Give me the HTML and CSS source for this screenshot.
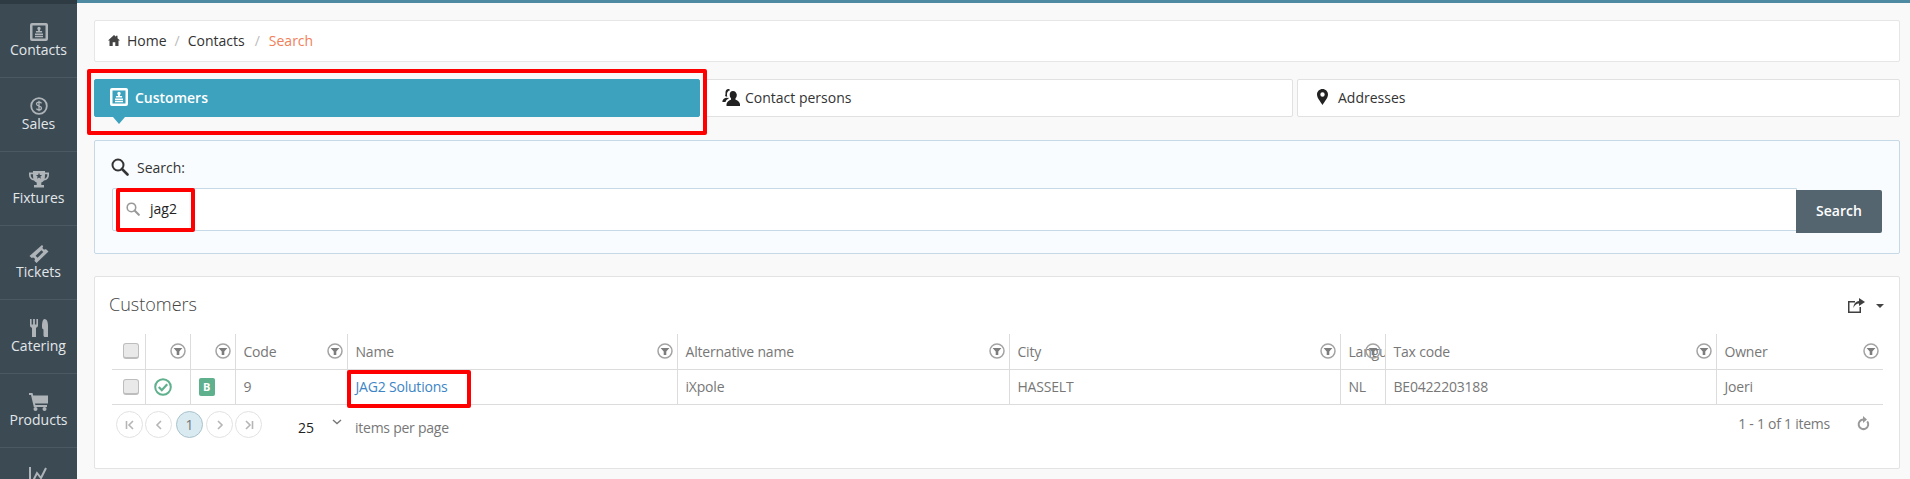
FILE: index.html
```html
<!DOCTYPE html>
<html lang="en">
<head>
<meta charset="utf-8">
<title>Contacts search</title>
<link rel="stylesheet" href="styles.css">
</head>
<body>
<svg class="sprite" width="0" height="0">
  <symbol id="i-contact" viewBox="0 0 18 18"><path fill-rule="evenodd" d="M2 0h14a2 2 0 0 1 2 2v14a2 2 0 0 1-2 2H2a2 2 0 0 1-2-2V2a2 2 0 0 1 2-2zm.5 2.500v13h13v-13z"/><path d="M9 3.800a1.700 1.700 0 0 1 1.700 1.700c0 .8-.4 1.300-.8 1.600v.9h2.200v1.500H5.900V8h2.200v-.9c-.4-.3-.8-.8-.8-1.600A1.700 1.700 0 0 1 9 3.800zM5 10.500h8V12H5zM5 12.800h8v1.500H5z"/></symbol>
  <symbol id="i-filter" viewBox="0 0 16 16"><circle cx="8" cy="8" r="7" fill="none" stroke="#a3a3a3" stroke-width="1.500"/><path fill="#7d7d7d" d="M3.600 5h8.800L9.300 8.500V12H6.700V8.500z"/></symbol>
  <symbol id="i-search" viewBox="0 0 18 18"><circle cx="7" cy="7" r="5.500" fill="none" stroke="currentColor" stroke-width="2"/><path d="M11 11l5.500 5.500" stroke="currentColor" stroke-width="2.600" stroke-linecap="round"/></symbol>
</svg>

<div class="app">
  <nav class="sidebar">
    <a class="nav-item">
      <svg class="nav-icon" width="18" height="18"><use href="#i-contact"/></svg>
      <span>Contacts</span>
    </a>
    <a class="nav-item">
      <svg class="nav-icon" width="18" height="18" viewBox="0 0 18 18"><circle cx="9" cy="9" r="7.800" fill="none" stroke="currentColor" stroke-width="1.800"/><path d="M11.500 6.300C11 5.500 10 5.200 9 5.200c-1.400 0-2.500.7-2.500 1.900 0 2.500 5 1.400 5 3.800 0 1.200-1.100 1.900-2.500 1.900-1.100 0-2.100-.4-2.600-1.200M9 3.800v10.400" fill="none" stroke="currentColor" stroke-width="1.300"/></svg>
      <span>Sales</span>
    </a>
    <a class="nav-item">
      <svg class="nav-icon" width="20" height="18" viewBox="0 0 20 18"><path fill-rule="evenodd" d="M4 0h12v1.500h4V4c0 3-2 5-5 5.600-.7 1-1.600 1.700-2.700 2V14H15v2.500H5V14h2.700v-2.400c-1.100-.3-2-1-2.700-2C2 9 0 7 0 4V1.500h4zM1.700 3.200V4c0 1.800 1 3.200 2.600 3.800-.2-1.400-.3-3-.3-4.600zm16.600 0H16c0 1.600-.1 3.200-.3 4.600 1.600-.6 2.600-2 2.600-3.800zM10 1.800l-.9 2.100-2.200.2 1.700 1.500-.5 2.200L10 6.600l1.900 1.200-.5-2.200 1.700-1.500-2.200-.2z"/></svg>
      <span>Fixtures</span>
    </a>
    <a class="nav-item">
      <svg class="nav-icon" width="20" height="18" viewBox="0 0 20 18"><path fill-rule="evenodd" d="M13 0l1.200 1.300a1.800 1.800 0 0 0 2.600 2.600L19.500 6.500 7.500 18l-2.200-2.300a1.800 1.800 0 0 0-2.600-2.600L.5 11zm-.6 5.200L6.600 10.800l1.900 1.900 5.800-5.600z"/></svg>
      <span>Tickets</span>
    </a>
    <a class="nav-item">
      <svg class="nav-icon" width="20" height="18" viewBox="0 0 20 18"><path d="M1 0h1.600v5.500h1.500V0h1.800v5.500h1.500V0H9v6.500c0 1.200-.9 2-2 2.300V18H3V8.800C1.900 8.500 1 7.700 1 6.500zM15.500 0c2.200 0 3.500 2.800 3.500 6.500V18h-3c-.8 0-1.500-.7-1.500-1.500V10.500C13.300 10 13 9 13 7.500 13 3 14 0 15.500 0z"/></svg>
      <span>Catering</span>
    </a>
    <a class="nav-item">
      <svg class="nav-icon" width="19" height="18" viewBox="0 0 19 18"><path d="M0 0h3.500l.7 2.500H19v8H6l.4 1.500H18v2H4.800L2 2H0z"/><circle cx="6.500" cy="16" r="2"/><circle cx="15.500" cy="16" r="2"/></svg>
      <span>Products</span>
    </a>
    <a class="nav-item">
      <svg class="nav-icon" width="20" height="18" viewBox="0 0 20 18"><path d="M0 0h2v16h18v2H0z"/><path d="M4 14l4-8 4 5 5-10" fill="none" stroke="currentColor" stroke-width="2"/></svg>
      <span>Reports</span>
    </a>
  </nav>

  <main class="content">
    <div class="breadcrumb">
      <svg class="home-icon" width="12" height="11" viewBox="0 0 12 11"><path d="M6 0l2 1.800V.8h1.500v2.400L12 5.500h-1.500V11H7.300V7.300H4.700V11H1.500V5.500H0z"/></svg>
      <span class="crumb">Home</span>
      <span class="crumb-sep">/</span>
      <span class="crumb">Contacts</span>
      <span class="crumb-sep crumb-sep-last">/</span>
      <span class="crumb-current">Search</span>
    </div>

    <div class="tabs">
      <div class="tab tab-customers tab-active">
        <svg class="tab-icon-active" width="18" height="18"><use href="#i-contact"/></svg>
        <span>Customers</span>
      </div>
      <div class="tab tab-persons">
        <svg class="tab-icon" width="18" height="17" viewBox="0 0 18 17"><path d="M6.500 0C4.500 0 3.500 1.500 3.500 3.300c0 1.700.1 2.700-.5 3.700.6.500 1.400.7 2.300.8C5 7 5 6 5 5c0-1.700 1-3.200 3-3.800C7.700.5 7.200 0 6.500 0zM4 8.800C2.300 9.300.5 10.500.3 13h3.200c.4-1.600 1.500-2.600 3-3.300V8.800C5.700 9 4.800 9 4 8.800zM11 2c-2.200 0-3.300 1.700-3.300 3.500 0 1.700.3 3 1.300 3.800v1.400c-2 .7-4 1.800-4.500 4.300v2h13.500v-2c-.5-2.500-2.500-3.600-4.500-4.300V9.300c1-.8 1.300-2.100 1.300-3.800C14.300 3.700 13.200 2 11 2z"/></svg>
        <span>Contact persons</span>
      </div>
      <div class="tab tab-addresses">
        <svg class="tab-icon" width="11" height="16" viewBox="0 0 11 16"><path fill-rule="evenodd" d="M5.500 0C8.500 0 11 2.400 11 5.500 11 9 7.500 12.500 5.500 16 3.500 12.500 0 9 0 5.500 0 2.400 2.500 0 5.500 0zm0 3.300a2.200 2.200 0 1 0 0 4.400 2.200 2.200 0 0 0 0-4.400z"/></svg>
        <span>Addresses</span>
      </div>
    </div>
    <div class="tab-arrow"></div>

    <section class="search-panel">
      <label class="search-label">
        <svg class="search-label-icon" width="18" height="18"><use href="#i-search"/></svg>
        <span>Search:</span>
      </label>
      <div class="search-row">
        <div class="search-input">
          <svg class="search-input-icon" width="14" height="14"><use href="#i-search"/></svg>
          <span>jag2</span>
        </div>
        <button class="search-btn">Search</button>
      </div>
    </section>

    <section class="grid-panel">
      <header class="grid-header">
        <h2>Customers</h2>
        <div class="grid-tools">
          <svg class="export-icon" width="17" height="15" viewBox="0 0 17 15"><path d="M0 3h7v1.500H1.500v9h10V9H13v6H0z"/><path d="M11 0l6 4-6 4V5.500C8.500 5.500 6.500 7 5.500 10c0-4 2-6.500 5.500-7z"/></svg>
          <span class="caret"></span>
        </div>
      </header>

      <table class="grid">
        <thead>
          <tr>
            <th class="c-check"><span class="checkbox"></span></th>
            <th class="c-status"><svg class="filter" width="16" height="16"><use href="#i-filter"/></svg></th>
            <th class="c-type"><svg class="filter" width="16" height="16"><use href="#i-filter"/></svg></th>
            <th class="c-code">Code<svg class="filter" width="16" height="16"><use href="#i-filter"/></svg></th>
            <th class="c-name">Name<svg class="filter" width="16" height="16"><use href="#i-filter"/></svg></th>
            <th class="c-alt">Alternative name<svg class="filter" width="16" height="16"><use href="#i-filter"/></svg></th>
            <th class="c-city">City<svg class="filter" width="16" height="16"><use href="#i-filter"/></svg></th>
            <th class="c-lang">Language<svg class="filter" width="16" height="16"><use href="#i-filter"/></svg></th>
            <th class="c-tax">Tax code<svg class="filter" width="16" height="16"><use href="#i-filter"/></svg></th>
            <th class="c-owner">Owner<svg class="filter" width="16" height="16"><use href="#i-filter"/></svg></th>
          </tr>
        </thead>
        <tbody>
          <tr>
            <td><span class="checkbox"></span></td>
            <td class="cell-icon"><svg width="18" height="18" viewBox="0 0 18 18"><circle cx="9" cy="9" r="7.800" fill="none" stroke="#5fb08c" stroke-width="2"/><path d="M4.800 9l3 3.200 5.400-6" fill="none" stroke="#5fb08c" stroke-width="2.200"/></svg></td>
            <td class="cell-icon"><span class="badge">B</span></td>
            <td>9</td>
            <td><a class="link">JAG2 Solutions</a></td>
            <td>iXpole</td>
            <td>HASSELT</td>
            <td>NL</td>
            <td>BE0422203188</td>
            <td>Joeri</td>
          </tr>
        </tbody>
      </table>

      <footer class="pager">
        <div class="pager-left">
          <span class="page-btn"><svg width="10" height="10" viewBox="0 0 10 10"><path d="M1.500 1v8M8 1L4 5l4 4" fill="none" stroke="#b5b5b5" stroke-width="1.600"/></svg></span>
          <span class="page-btn"><svg width="10" height="10" viewBox="0 0 10 10"><path d="M7 1L3 5l4 4" fill="none" stroke="#b5b5b5" stroke-width="1.600"/></svg></span>
          <span class="page-btn page-current">1</span>
          <span class="page-btn"><svg width="10" height="10" viewBox="0 0 10 10"><path d="M3 1l4 4-4 4" fill="none" stroke="#b5b5b5" stroke-width="1.600"/></svg></span>
          <span class="page-btn"><svg width="10" height="10" viewBox="0 0 10 10"><path d="M8.500 1v8M2 1l4 4-4 4" fill="none" stroke="#b5b5b5" stroke-width="1.600"/></svg></span>
          <span class="page-size">25</span>
          <svg class="page-chevron" width="10" height="6" viewBox="0 0 10 6"><path d="M1 1l4 3.500L9 1" fill="none" stroke="#777" stroke-width="1.400"/></svg>
          <span class="page-label">items per page</span>
        </div>
        <div class="pager-right">
          <span>1 - 1 of 1 items</span>
          <svg class="refresh" width="13" height="15" viewBox="0 0 13 15"><path d="M10.200 5.300a4.800 4.800 0 1 1-3.800-1.800" fill="none" stroke="#999" stroke-width="2"/><path fill="#999" d="M6 0v7l4-3.500z"/></svg>
        </div>
      </footer>
    </section>
  </main>
</div>

<div class="mark mark-tab"></div>
<div class="mark mark-search"></div>
<div class="mark mark-name"></div>
</body>
</html>
```
FILE: styles.css
```css
* { box-sizing: border-box; }
html, body { margin: 0; padding: 0; height: 100%; overflow: hidden; }
body { font-family: "Open Sans", "Liberation Sans", sans-serif; font-size: 14px; color: #333; background: #f9f9f9; position: relative; }
.sprite { position: absolute; }
.app { display: flex; height: 479px; overflow: hidden; }

.sidebar { width: 77px; flex: none; background: #3c4a54; border-top: 4px solid #2f3b43; overflow: hidden; }
.nav-item { display: flex; flex-direction: column; align-items: center; height: 74px; padding-top: 19px; border-bottom: 1px solid #4c5963; color: #e2e7ea; line-height: 18px; }
.nav-icon { color: #aeb4b8; fill: currentColor; flex: none; }

.content { flex: 1; min-width: 0; border-top: 3px solid #4f8aa3; padding: 17px 10px 0 17px; }

.breadcrumb { height: 42px; background: #fff; border: 1px solid #e6e6e6; border-radius: 2px; display: flex; align-items: center; padding: 0 13px 2px; }
.home-icon { fill: #444; margin-right: 7px; }
.crumb { color: #333; }
.crumb-sep { color: #bbb; margin: 0 8px; }
.crumb-sep-last { margin: 0 9px 0 10px; }
.crumb-current { color: #f0805a; }

.tabs { display: flex; gap: 4px; margin-top: 17px; height: 38px; }
.tab { display: flex; align-items: center; background: #fff; border: 1px solid #e1e1e1; border-radius: 2px; padding: 0 15px 2px; color: #333; }
.tab-customers { width: 606px; padding-right: 0; }
.tab-persons { width: 589px; padding-left: 17px; }
.tab-addresses { flex: 1; padding-left: 19px; }
.tab-active { background: #3ca2bd; border-color: #3ca2bd; color: #fff; font-weight: 600; padding-left: 15px; }
.tab-icon { fill: #222; margin-right: 5px; flex: none; }
.tab-addresses .tab-icon { margin-right: 10px; }
.tab-icon-active { fill: #fff; margin-right: 7px; flex: none; }
.tab-arrow { width: 0; height: 0; margin-left: 19px; border-left: 6px solid transparent; border-right: 6px solid transparent; border-top: 7px solid #3ca2bd; }

.search-panel { height: 114px; margin-top: 16px; background: #f9fcfe; border: 1px solid #c5d9e6; border-radius: 2px; padding: 15px 17px 0; }
.search-label { display: flex; align-items: center; gap: 8px; height: 22px; color: #333; margin-left: -1px; }
.search-label-icon { color: #333; flex: none; }
.search-row { display: flex; align-items: flex-start; margin-top: 10px; }
.search-input { flex: 1; height: 43px; background: #fff; border: 1px solid #c5d9e6; border-radius: 2px 0 0 2px; display: flex; align-items: center; padding: 0 11px 2px 13px; gap: 10px; color: #222; }
.search-input-icon { color: #999; flex: none; }
.search-btn { width: 86px; height: 43px; margin-top: 2px; margin-left: -1px; padding: 0 0 3px; background: #556570; border: 0; border-radius: 0 2px 2px 0; color: #fff; font: 600 14px "Open Sans", "Liberation Sans", sans-serif; }

.grid-panel { height: 193px; margin-top: 22px; background: #fff; border: 1px solid #e3e3e3; border-radius: 2px; padding: 0 16px 0 17px; }
.grid-header { display: flex; justify-content: space-between; align-items: center; height: 57px; margin-left: -3px; }
.grid-header h2 { margin: 0 0 4px; font-size: 18px; font-weight: 300; color: #444; }
.grid-tools { display: flex; align-items: center; gap: 11px; }
.export-icon { fill: #3f3f3f; margin-left: -1px; }
.caret { width: 0; height: 0; margin-right: -1px; border-left: 4px solid transparent; border-right: 4px solid transparent; border-top: 4px solid #444; }

.grid { width: 100%; table-layout: fixed; border-collapse: collapse; color: #777; letter-spacing: -0.2px; }
.grid th { position: relative; height: 35px; padding: 0 8px; font-weight: 400; text-align: left; border-left: 1px solid #dcdcdc; border-bottom: 1px solid #dcdcdc; white-space: nowrap; overflow: hidden; }
.grid td { height: 35px; padding: 0 8px; border-left: 1px solid #dcdcdc; border-bottom: 1px solid #dcdcdc; white-space: nowrap; }
.grid th:first-child, .grid td:first-child { border-left: 0; padding: 0 0 0 8px; }
.c-check { width: 33px; }
.c-status, .c-type { width: 45px; }
.c-code { width: 112px; }
.c-name { width: 330px; }
.c-alt { width: 332px; }
.c-city { width: 331px; }
.c-lang { width: 45px; }
.c-tax { width: 331px; }
.filter { position: absolute; right: 4px; top: 9px; }
.checkbox { display: block; width: 16px; height: 16px; margin-left: 3px; background: #e9e9e9; border: 1px solid #bdbdbd; border-bottom-width: 2px; border-radius: 3px; }
.cell-icon { line-height: 0; }
.badge { display: inline-flex; align-items: center; justify-content: center; width: 16px; height: 18px; background: #5fb08c; border-radius: 2px; color: #fff; font-size: 11px; font-weight: 700; line-height: 18px; }
.link { color: #3d85c6; }

.pager { display: flex; justify-content: space-between; align-items: center; height: 40px; color: #777; letter-spacing: -0.25px; }
.pager-left { display: flex; align-items: center; padding-left: 4px; }
.page-btn { width: 27px; height: 27px; border: 1px solid #e2e2e2; border-radius: 50%; display: flex; align-items: center; justify-content: center; margin-right: 2px; }
.page-current { background: #d9ebf1; border-color: #a9c2cc; color: #777; margin: 0 3px 0 2px; }
.page-size { margin-left: 34px; margin-top: 5px; color: #222; letter-spacing: 0; }
.page-chevron { margin-left: 18px; margin-top: -5px; }
.page-label { margin-left: 13px; margin-top: 5px; }
.pager-right { display: flex; align-items: center; gap: 27px; padding-right: 13px; margin-top: -2px; }

.mark { position: absolute; border: 4px solid #f00; border-radius: 2px; pointer-events: none; }
.mark-tab { left: 87px; top: 69px; width: 620px; height: 66px; }
.mark-search { left: 116px; top: 188px; width: 79px; height: 44px; }
.mark-name { left: 347px; top: 370px; width: 124px; height: 38px; }
```
